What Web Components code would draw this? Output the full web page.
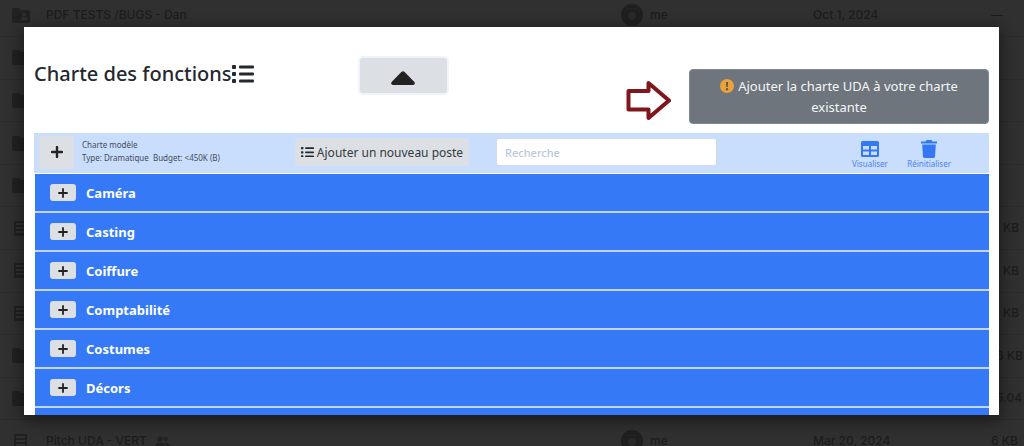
<!DOCTYPE html>
<html lang="fr">
<head>
<meta charset="utf-8">
<title>Charte des fonctions</title>
<style>
html,body{height:100%}
body{margin:0;overflow:hidden;background:#303030;font-family:"Noto Sans","Open Sans",sans-serif;color:#2b2f36}
</style>
</head>
<body>
<app-screen></app-screen>

<template id="t-screen">
<style>
:host{display:block;position:relative;height:100%;overflow:hidden}
chart-dialog{position:absolute;inset:27px 25px 31px 24px}
</style>
<file-list></file-list>
<chart-dialog>
  <chart-header slot="header"></chart-header>
  <chart-toolbar></chart-toolbar>
  <chart-row>Caméra</chart-row>
  <chart-row>Casting</chart-row>
  <chart-row>Coiffure</chart-row>
  <chart-row>Comptabilité</chart-row>
  <chart-row>Costumes</chart-row>
  <chart-row>Décors</chart-row>
  <chart-row></chart-row>
</chart-dialog>
</template>

<template id="t-files">
<style>
:host{display:flow-root;height:100%;color:#1c1c1c;font:500 12px/10px Inter,"Noto Sans",sans-serif}
table{width:100%;height:calc(100% + 23px);margin-top:-6px;border-collapse:collapse;table-layout:fixed}
tr{height:9%}
td{padding:0;border-bottom:1px solid #2c2c2c;vertical-align:middle;white-space:nowrap}
.i{width:46px}.o{width:192px}.d{width:178px}.s{width:33px}
.i svg{display:block;margin-left:12px}
.owner{display:flex;align-items:center;gap:7px}
.people{vertical-align:-2px;margin-left:5px}
.in{padding-left:12px}
.in2{padding-left:5px}
svg{fill:#212121}
</style>
<table>
<colgroup><col class="i"><col><col class="o"><col class="d"><col class="s"></colgroup>
<tbody></tbody>
</table>
</template>

<template id="t-dialog">
<style>
:host{display:block;overflow:hidden;background:#fff;box-shadow:0 4px 14px 2px rgba(0,0,0,.45)}
main{padding:0 10px}
</style>
<main><slot name="header"></slot><slot></slot></main>
</template>

<template id="t-header">
<style>
:host{display:grid;grid-template-columns:34% 88px 1fr;align-items:start;padding:31px 0 9px}
h1{display:flex;align-items:center;margin:0;font-size:20px;line-height:32px;font-weight:500;color:#24282f}
.up{display:flex;justify-content:center;align-items:center;height:35px;margin-left:1px;padding:4px 0 0;border:0;border-radius:3px;background:#dce0e4;box-shadow:0 0 0 2px #eff3fa}
.right{display:flex;justify-content:flex-end;align-items:center;gap:18px;margin-top:11px}
.add{width:300px;padding:6px 24px 5px;border:1px solid #7f8790;border-radius:4px;background:#6e757d;color:#f4f5f7;font:13px/21px "Noto Sans",sans-serif}
.add svg{vertical-align:-2px;margin-right:4px}
</style>
<h1>Charte des fonctions<list-icon style="--w:22px"></list-icon></h1>
<button class="up" aria-label="Replier"><svg width="24" height="14" viewBox="0 0 24 14"><path d="M10.6 .8Q12-.4 13.4.8L23.4 11Q24.6 14 22 14H2Q-.6 14 .6 11Z" fill="#222"/></svg></button>
<div class="right">
<svg width="45" height="48" viewBox="0 0 45 48"><path d="M2.500 18H22.500V10L43 27.500 22.500 45V36.500H2.500Z" fill="#fff" stroke="#7e161c" stroke-width="4" stroke-linejoin="round"/></svg>
<button class="add"><svg width="14" height="14" viewBox="0 0 14 14"><circle cx="7" cy="7" r="7" fill="#eba23c"/><path d="M5.900 3h2.200l-.3 5H6.200z" fill="#6a5a3c"/><circle cx="7" cy="10.200" r="1.200" fill="#6a5a3c"/></svg>Ajouter la charte UDA à votre charte existante</button>
</div>
</template>

<template id="t-list">
<style>:host{display:inline-block;width:var(--w,13px)}svg{display:block;width:100%}</style>
<svg viewBox="0 0 22 18" fill="#24282f"><rect width="4" height="4" rx="1"/><rect y="7" width="4" height="4" rx="1"/><rect y="14" width="4" height="4" rx="1"/><rect x="7" y=".5" width="15" height="3" rx="1"/><rect x="7" y="7.500" width="15" height="3" rx="1"/><rect x="7" y="14.500" width="15" height="3" rx="1"/></svg>
</template>

<template id="t-toolbar">
<style>
:host{display:grid;grid-template-columns:35px 221px 174px 1fr 99px;align-items:center;height:40px;padding:0 38px 0 5px;margin-bottom:1px;background:#c9defc}
button{border:0;padding:0;font-family:"Noto Sans",sans-serif}
.plus{display:grid;place-items:center;height:33px;margin-bottom:2px;border-radius:3px;background:#dce0e4}
p{margin:0 0 5px 8px;font-size:8px;line-height:13px;color:#444b57;white-space:pre}
.new{display:flex;align-items:center;justify-content:center;gap:3px;height:28px;margin-bottom:2px;border-radius:3px;background:#dce0e4;color:#343a42;font-size:12px;white-space:nowrap}
input{display:block;box-sizing:border-box;width:221px;height:28px;margin:0 0 2px 27px;padding:0 8px;border:1px solid #d3dae4;border-radius:3px;background:#fff;font:500 11px "Noto Sans",sans-serif}
input::placeholder{color:#bcc7d8;opacity:1}
nav{display:flex;justify-content:space-between;padding-top:4px}
nav button{display:flex;flex-direction:column;align-items:center;background:none;color:#4c83ec;font-size:8px;line-height:12px}
nav svg{fill:#3478f6}
</style>
<button class="plus" aria-label="Ajouter"><svg width="12" height="12" viewBox="0 0 12 12"><path d="M6 1v10M1 6h10" stroke="#222" stroke-width="2.400" stroke-linecap="round"/></svg></button>
<p>Charte modèle
Type: Dramatique  Budget: &lt;450K (B)</p>
<button class="new"><list-icon></list-icon>Ajouter un nouveau poste</button>
<div><input type="search" placeholder="Recherche" aria-label="Recherche"></div>
<nav>
<button><svg width="18" height="18" viewBox="0 0 18 18"><path fill-rule="evenodd" d="M1.500 1h15Q18 1 18 2.500v13Q18 17 16.500 17h-15Q0 17 0 15.500v-13Q0 1 1.500 1ZM2 6v3.500h6V6ZM10 6v3.500h6V6ZM2 11.500V15h6v-3.500ZM10 11.500V15h6v-3.500Z"/></svg>Visualiser</button>
<button><svg width="16" height="18" viewBox="0 0 16 18"><path d="M0 1.500h4.500L5.500 0h5l1 1.500H16v2H0ZM1.200 4.500h13.600L14 16.500Q13.800 18 12.500 18h-9Q2.200 18 2 16.500Z"/></svg>Réinitialiser</button>
</nav>
</template>

<template id="t-row">
<style>
:host{display:flex;align-items:center;gap:10px;height:37px;margin:0 0 0 1px;padding-left:15px;border-bottom:2px solid #c3d5f7;background:#3579f7;color:#fff;font-size:13px;font-weight:700}
button{display:grid;place-items:center;width:26px;height:17px;padding:0;border:0;border-radius:3px;background:#dce0e4}
</style>
<button aria-label="Déplier"><svg width="10" height="10" viewBox="0 0 10 10"><path d="M5 1v8M1 5h8" stroke="#222" stroke-width="1.800" stroke-linecap="round"/></svg></button>
<slot></slot>
</template>

<script>
const define = (name, id, ready) => customElements.define(name, class extends HTMLElement {
  constructor() {
    super();
    this.attachShadow({mode: "open"}).append(document.getElementById(id).content.cloneNode(true));
    if (ready) ready(this.shadowRoot);
  }
});
const folder = '<svg width="18" height="15" viewBox="0 0 18 15"><path d="M2 0h5l2 2h7q2 0 2 2v9q0 2-2 2H2q-2 0-2-2V2Q0 0 2 0Z"/>';
const shared = folder + '<g fill="#303030"><circle cx="12" cy="6.500" r="1.700"/><path d="M8.500 12q0-3 3.500-3t3.500 3z"/></g></svg>';
const sheet = '<svg width="18" height="15" viewBox="0 0 18 15"><path fill-rule="evenodd" d="M3 0h11q1 0 1 1v13q0 1-1 1H3q-1 0-1-1V1q0-1 1-1ZM4 2v2h9V2ZM4 6v2h9V6ZM4 10v2h9v-2Z"/></svg>';
const people = '<svg class="people" width="15" height="11" viewBox="0 0 15 11"><circle cx="5" cy="3" r="2.500"/><circle cx="10.500" cy="3" r="2"/><path d="M0 11Q0 6.500 5 6.500T10 11ZM11 11q0-3-1.500-4.300Q15 6.500 15 11Z"/></svg>';
const owner = '<span class="owner"><svg width="22" height="22" viewBox="0 0 22 22"><circle cx="11" cy="11" r="11" fill="#1f1f1f"/><circle cx="11" cy="12" r="4" fill="#292929"/><path d="M6 5h10" stroke="#2b2b2b" stroke-dasharray="2 1"/></svg>me</span>';
const files = [
  [shared, "PDF TESTS /BUGS - Dan", owner, "Oct 1, 2024", "—", ""],
  [folder + "</svg>"], [folder + "</svg>"], [folder + "</svg>"], [folder + "</svg>"],
  [sheet, "", "", "", "KB", "in"], [sheet, "", "", "", "KB", "in"], [sheet, "", "", "", "KB", "in"],
  [folder + "</svg>", "", "", "", "6 KB", "in2"],
  [folder + "</svg>", "", "", "", "5.04", "in2"],
  [sheet, "Pitch UDA - VERT " + people, owner, "Mar 20, 2024", "6 KB", ""]
];
define("list-icon", "t-list");
define("file-list", "t-files", root => {
  root.querySelector("tbody").innerHTML = files.map(([icon, name = "", who = "", date = "", size = "", cls = ""]) =>
    `<tr><td class="i">${icon}</td><td>${name}</td><td>${who}</td><td>${date}</td><td class="${cls}">${size}</td></tr>`).join("");
});
define("chart-dialog", "t-dialog");
define("chart-header", "t-header");
define("chart-toolbar", "t-toolbar");
define("chart-row", "t-row");
define("app-screen", "t-screen");
</script>
</body>
</html>
